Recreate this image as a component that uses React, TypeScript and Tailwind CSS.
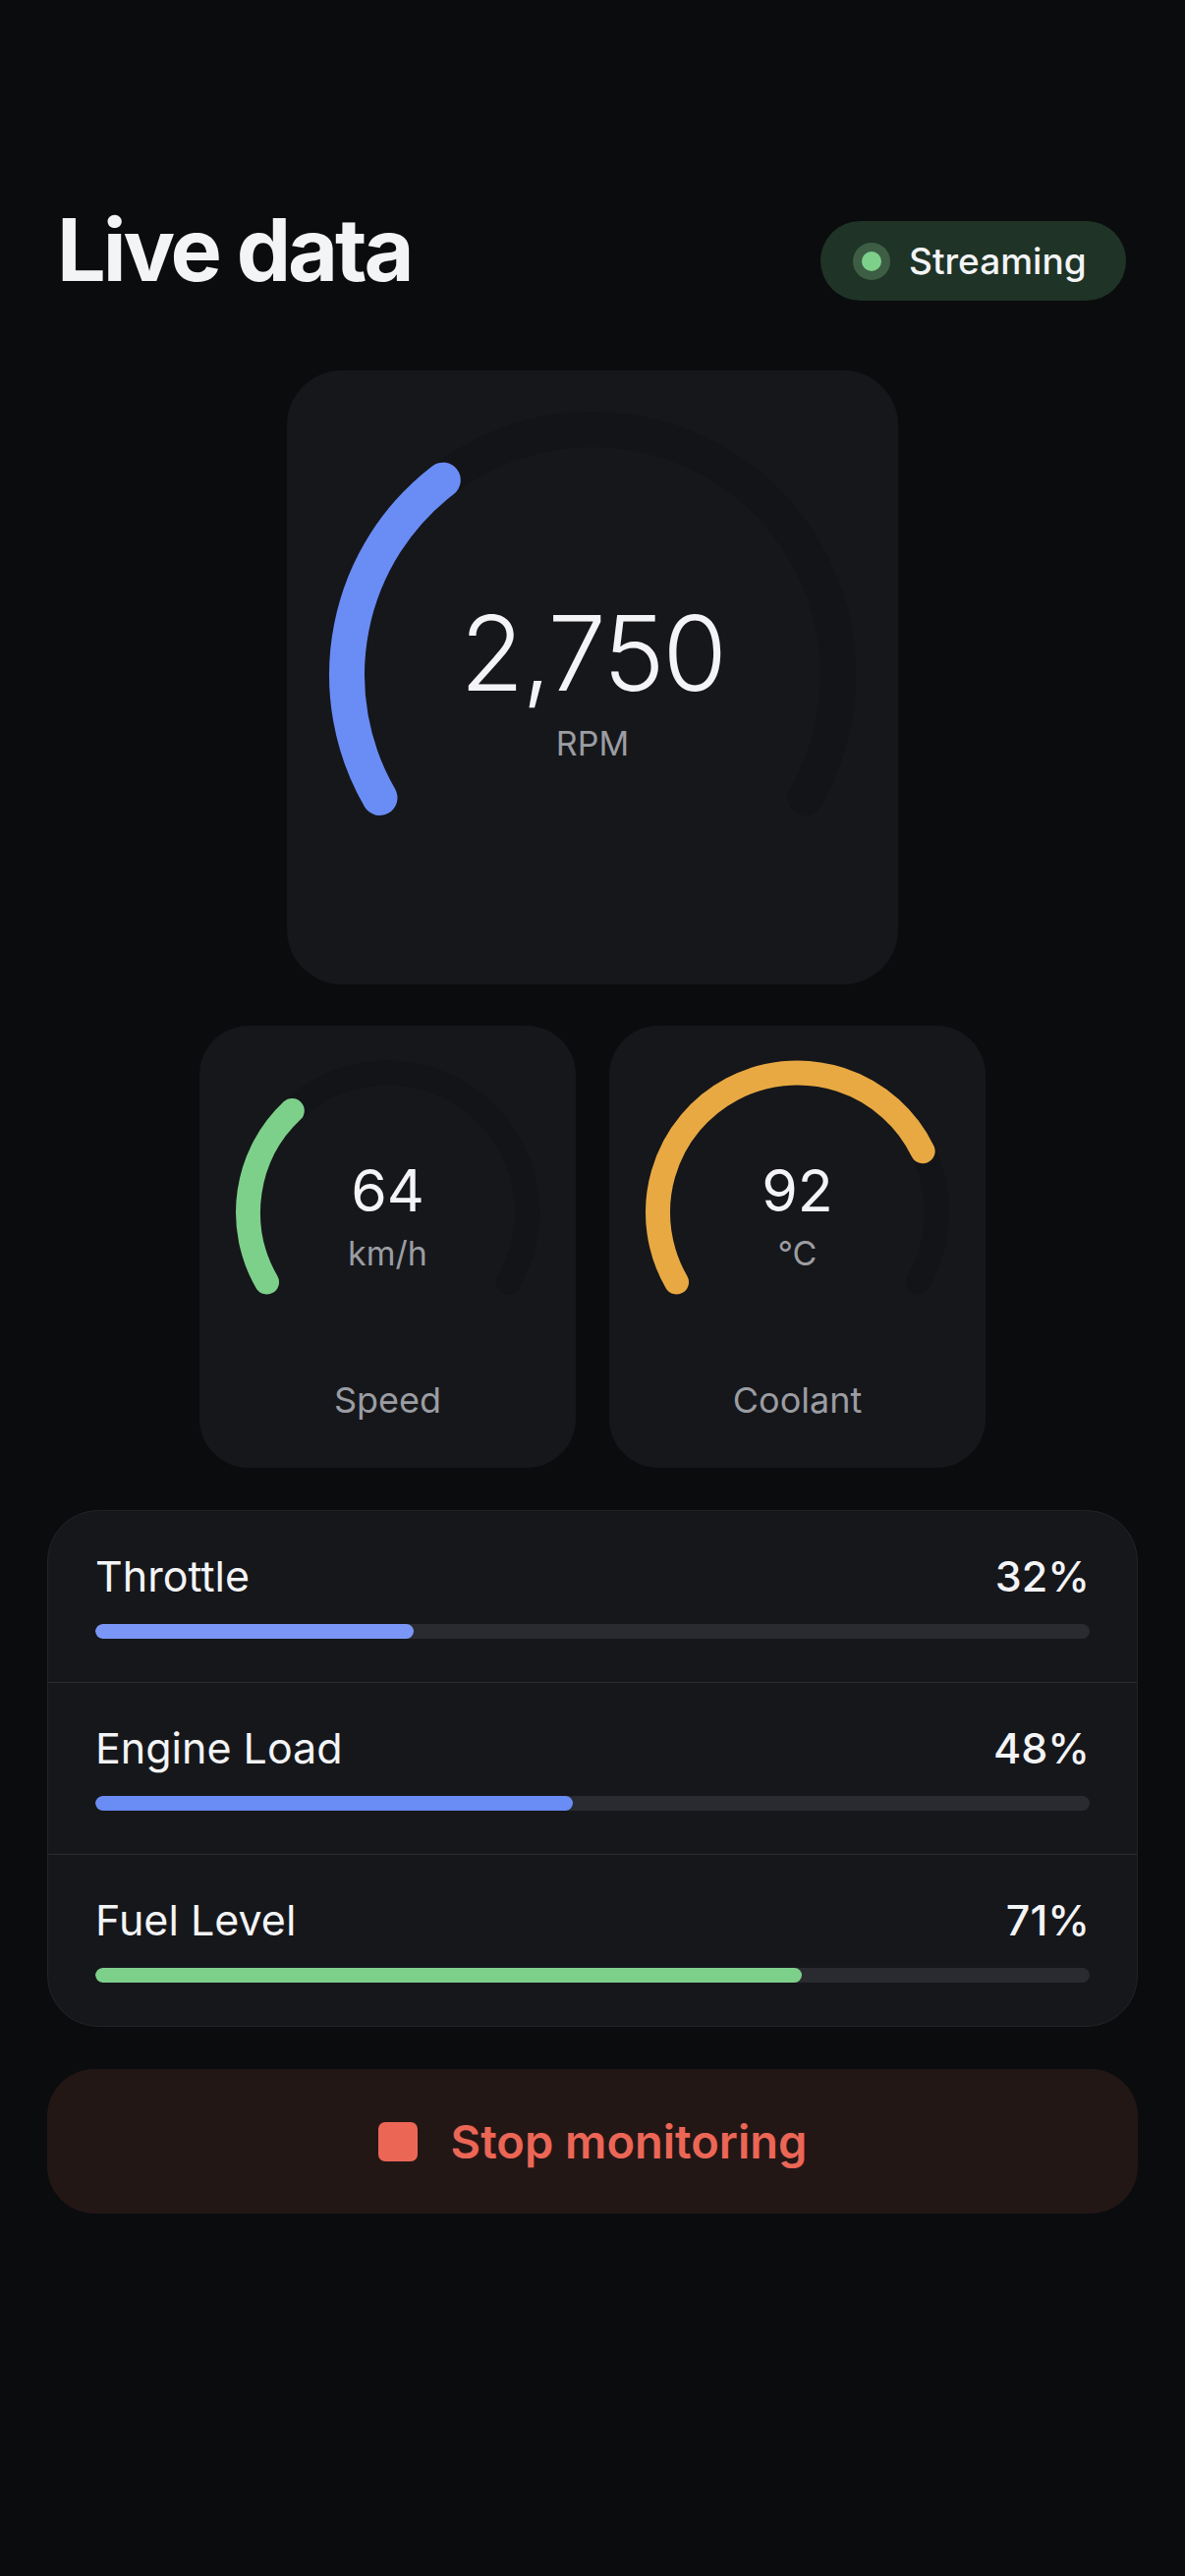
import React from 'react';

type GaugeProps = {
  size: number;
  height: number;
  cx: number;
  cy: number;
  r: number;
  stroke: number;
  value: number;
  color: string;
};

// arc sweeps 240deg, from bottom-left (150deg) clockwise to bottom-right (390deg)
function arcPath(cx: number, cy: number, r: number, from: number, to: number) {
  const rad = (d: number) => (d * Math.PI) / 180;
  const x1 = cx + r * Math.cos(rad(from));
  const y1 = cy + r * Math.sin(rad(from));
  const x2 = cx + r * Math.cos(rad(to));
  const y2 = cy + r * Math.sin(rad(to));
  const large = to - from > 180 ? 1 : 0;
  return `M ${x1} ${y1} A ${r} ${r} 0 ${large} 1 ${x2} ${y2}`;
}

function Gauge({ size, height, cx, cy, r, stroke, value, color }: GaugeProps) {
  return (
    <svg
      width={size}
      height={height}
      viewBox={`0 0 ${size} ${height}`}
      className="[grid-area:1/1]"
    >
      <path
        d={arcPath(cx, cy, r, 150, 390)}
        fill="none"
        stroke="#131418"
        strokeWidth={stroke}
        strokeLinecap="round"
      />
      <path
        d={arcPath(cx, cy, r, 150, 150 + 240 * value)}
        fill="none"
        stroke={color}
        strokeWidth={stroke}
        strokeLinecap="round"
      />
    </svg>
  );
}

function SmallCard({
  value,
  unit,
  label,
  fraction,
  color,
}: {
  value: string;
  unit: string;
  label: string;
  fraction: number;
  color: string;
}) {
  return (
    <div className="w-[383px] h-[450px] rounded-[50px] bg-[#16171b] flex flex-col items-center">
      <div className="grid w-full">
        <Gauge size={383} height={340} cx={191.5} cy={190} r={142} stroke={25} value={fraction} color={color} />
        <div className="[grid-area:1/1] flex flex-col items-center pt-[138px]">
          <div className="text-[59px] leading-none font-normal text-[#f4f4f6]">{value}</div>
          <div className="mt-[18px] text-[34px] leading-none text-[#9b9da2]">{unit}</div>
        </div>
      </div>
      <div className="mt-[23px] text-[36px] leading-none text-[#9b9da2]">{label}</div>
    </div>
  );
}

const rows = [
  { name: 'Throttle', pct: 32, color: 'bg-[#7a97f7]' },
  { name: 'Engine Load', pct: 48, color: 'bg-[#6a8cf5]' },
  { name: 'Fuel Level', pct: 71, color: 'bg-[#7dd08a]' },
];

export default function App() {
  return (
    <div className="min-h-[2622px] w-full bg-[#0b0c0e] font-['Inter','Liberation_Sans',sans-serif] pt-[210px]">
      <div className="flex items-start justify-between pl-[58px] pr-[60px]">
        <h1 className="text-[88px] leading-none font-bold tracking-[-0.035em] text-[#f3f4f6]">Live data</h1>
        <div className="mt-[15px] h-[81px] w-[311px] rounded-full bg-[#1f3326] flex items-center pl-[33px] gap-[19px]">
          <div className="w-[38px] h-[38px] rounded-full bg-[#3d5e45] flex items-center justify-center">
            <div className="w-[20px] h-[20px] rounded-full bg-[#7dd08a]" />
          </div>
          <span className="text-[37px] leading-none font-medium text-[#f3f4f6]">Streaming</span>
        </div>
      </div>

      <div className="mt-[71px] flex justify-center">
        <div className="w-[622px] h-[625px] rounded-[56px] bg-[#16171b] grid">
          <Gauge size={622} height={625} cx={311} cy={310} r={250} stroke={36} value={2750 / 8000} color="#6a8cf5" />
          <div className="[grid-area:1/1] flex flex-col items-center pt-[235px]">
            <div className="text-[106px] leading-none font-light tracking-[-0.02em] text-[#f4f4f6]">2,750</div>
            <div className="mt-[22px] text-[34px] leading-none text-[#9b9da2]">RPM</div>
          </div>
        </div>
      </div>

      <div className="mt-[42px] flex justify-center gap-[34px]">
        <SmallCard value="64" unit="km/h" label="Speed" fraction={64 / 200} color="#7dd08a" />
        <SmallCard value="92" unit="°C" label="Coolant" fraction={92 / 120} color="#e8a943" />
      </div>

      <div className="mx-[48px] mt-[43px] rounded-[52px] border border-[#222327] bg-[#16171b] overflow-hidden">
        {rows.map((row, i) => (
          <div key={row.name} className={i > 0 ? 'border-t border-[#2a2b30]' : ''}>
            <div className="px-[48px] pt-[41px] pb-[44px]">
              <div className="flex justify-between text-[43px] leading-[51px] text-[#f3f4f6]">
                <span>{row.name}</span>
                <span className="font-medium">{row.pct}%</span>
              </div>
              <div className="mt-[23px] h-[15px] rounded-full bg-[#2a2b30] overflow-hidden">
                <div className={`h-full rounded-full ${row.color}`} style={{ width: `${row.pct}%` }} />
              </div>
            </div>
          </div>
        ))}
      </div>

      <button className="mx-[48px] mt-[43px] h-[147px] w-[1110px] rounded-[48px] bg-[#231716] flex items-center justify-center gap-[34px]">
        <div className="w-[40px] h-[40px] rounded-[7px] bg-[#ec6656]" />
        <span className="text-[47px] leading-none font-semibold text-[#ec6656]">Stop monitoring</span>
      </button>
    </div>
  );
}
